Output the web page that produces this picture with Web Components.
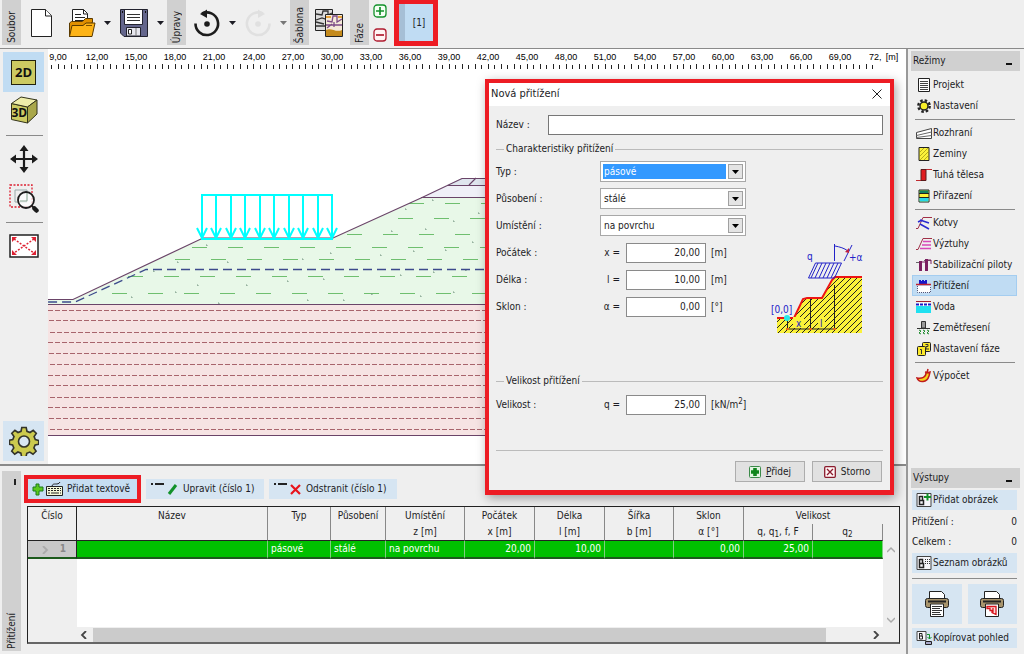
<!DOCTYPE html>
<html lang="cs">
<head>
<meta charset="utf-8">
<title>Stabilita svahu – Přitížení</title>
<style>
  html, body { margin: 0; height: 100%; }
  body {
    font: 10px/14px "DejaVu Sans Condensed", "DejaVu Sans", "Noto Sans", sans-serif;
    color: #1c1c24;
    background: #efefef;
  }
</style>
</head>
<body>
<app-shell></app-shell>

<script>
const ICONS = {
  file: [24, 30, `<path d="M1.5 1.5h14l6 6v21h-20z" fill="#fff" stroke="#222"/><path d="M15.500 1.500v6.500h6" fill="#fff" stroke="#222"/>`],
  open: [28, 30, `<path d="M4.500 20V1.500h11l4 4V16h-15" fill="#fff" stroke="#222"/><path d="M15.500 1.500v4.500h4" fill="none" stroke="#222"/><path d="M7 6.500h6M7 9.500h10M7 12.500h10" stroke="#222"/><path d="M1.500 28.500V15l2-1.500h11l3-3h7v4z" fill="#e08f00" stroke="#5a3a00"/><path d="M1.500 28.500L4 17.500h11l3-2.500h9l-3 13.500z" fill="#fdb316" stroke="#5a3a00"/><path d="M18 17.500h6" stroke="#7a5000"/>`],
  save: [30, 30, `<path d="M1.500 1.500h27v27H5l-3.500-3.500z" fill="#64668c" stroke="#22222e"/><path d="M5.500 2v14.500h18V2" fill="#fff" stroke="#22222e"/><path d="M8 6.500h13M8 9.500h13M8 12.500h13" stroke="#333"/><path d="M7.500 28v-8.500h14V28z" fill="#e6e6ee" stroke="#22222e"/><path d="M9.500 21.500h3v4.500h-3z" fill="#fff" stroke="#222"/><path d="M17 20v8" stroke="#777"/><path d="M3 4h1M26 4h1" stroke="#111" stroke-width="2"/>`],
  undo: [28, 28, `<path d="M2.500 14.500A11.300 11.300 0 1 0 9 4.500" fill="none" stroke="#1c1c1c" stroke-width="2.600"/><path d="M7 5l7-4.500v8.500z" fill="#1c1c1c"/><circle cx="14" cy="15" r="2.800" fill="#1c1c1c"/>`],
  redo: [28, 28, `<path d="M25.500 14.500A11.300 11.300 0 1 1 19 4.500" fill="none" stroke="#e0e0e0" stroke-width="2.600"/><path d="M21 5l-7-4.500v8.500z" fill="#e0e0e0"/><circle cx="14" cy="15" r="2.800" fill="#e0e0e0"/>`],
  template: [30, 30, `<path d="M1.500 1.500h17v21h-17z" fill="#ddd" stroke="#222"/><path d="M2 6l6 1 1-4h5v4l4-2M2 12l6-2 6 2M2 18h9M2 14l8 2" fill="none" stroke="#333" stroke-width="1.300"/><path d="M11.500 6.500h17v22h-17z" fill="#f4ead8" stroke="#222"/><path d="M12 22c5-3 10 3 16 0v6H12z" fill="#c48a1c"/><path d="M13 13l5 1 1-6h4v6l5-3M12 17h16M13 20l5-4M20 14v5" fill="none" stroke="#7b4a86" stroke-width="1.300"/><path d="M12 9h5M24 9h4" stroke="#e8a23c" stroke-width="2"/>`],
  plusBox: [14, 14, `<rect x="1" y="1" width="12" height="12" rx="3" fill="#f4fff4" stroke="#12912a" stroke-width="1.300"/><path d="M7 3v8M3 7h8" stroke="#12912a" stroke-width="1.700"/>`],
  minusBox: [14, 14, `<rect x="1" y="1" width="12" height="12" rx="3" fill="#fff4f4" stroke="#b01c30" stroke-width="1.300"/><path d="M3 7h8" stroke="#b01c30" stroke-width="1.700"/>`],
  caret: [7, 4, `<path d="M0 0h7L3.500 4z" fill="currentColor"/>`],
  cube: [28, 28, `<path d="M1.500 7.500l16 3.500v16l-16-3.500z" fill="#ccca62" stroke="#33331a"/><path d="M1.500 7.500L11 1l16 3-9.500 7z" fill="#eeedaa" stroke="#33331a"/><path d="M17.500 11L27 4v14l-9.500 9z" fill="#a9a74a" stroke="#33331a"/>`],
  move: [28, 28, `<path d="M14 4v20M4 14h20" stroke="#1c1c1c" stroke-width="2.200"/><path d="M14 0l4.500 6h-9zM14 28l4.500-6h-9zM0 14l6-4.500v9zM28 14l-6-4.500v9z" fill="#1c1c1c"/>`],
  zoom: [30, 30, `<path d="M1 1h22v22H1z" fill="none" stroke="#d23" stroke-width="1.300" stroke-dasharray="2 1.500"/><path d="M6 6h12v12H6z" fill="none" stroke="#9aa"/><circle cx="17" cy="16" r="8" fill="#fff" fill-opacity=".75" stroke="#1c1c1c" stroke-width="1.800"/><path d="M18 9v8h-7" fill="none" stroke="#8aa894"/><path d="M23 22l2 2" stroke="#1c1c1c" stroke-width="2"/><path d="M25.500 24.500l2 2" stroke="#1c1c1c" stroke-width="4.500" stroke-linecap="round"/>`],
  extent: [30, 24, `<path d="M1 1h28v22H1z" fill="#fff" stroke="#222" stroke-width="1.500"/><path d="M5 5l20 14M25 5L5 19" stroke="#d23" stroke-width="1.500" stroke-dasharray="2 1.500"/><path d="M3 3h5L3 8zM27 3h-5l5 5zM3 21h5l-5-5zM27 21h-5l5-5z" fill="#d23"/>`],
  gear: [30, 30, `<path d="M12.800 1.500h4.400l.8 3.800 3 1.200 3.200-2.200 3.100 3.100-2.200 3.200 1.200 3 3.400.8v3.800l-3.600.8-1.200 3 2.200 3.200-3.100 3-3.200-2.100-3 1.200-.8 3.400h-4.400l-.7-3.500-3-1.200-3.200 2.200-3-3.100 2.100-3.200-1.200-3-3.200-.7v-4l3.400-.7 1.200-3-2.200-3.200L5.900 4.300 9 6.500l3-1.200z" fill="#ccca4e" stroke="#33332a" stroke-width="1.600"/><circle cx="15" cy="15.500" r="5.500" fill="#d9e6f3" stroke="#33332a" stroke-width="1.600"/>`],
  addKeys: [32, 16, `<path d="M4 3h3v3h4v4H7v4H4v-4H1V6h3z" fill="#5ac81e" stroke="#1c7a1c"/><path d="M14.500 5.500h16v9h-16z" fill="#f4f8d8" stroke="#222"/><path d="M16 7.500h13M16 9.500h13" stroke="#222" stroke-dasharray="2 1"/><path d="M16 12h2M19 12h8M28 12h1" stroke="#222"/><path d="M20 5c1-4 6 0 8-4" fill="none" stroke="#222"/>`],
  editRow: [30, 14, `<path d="M1 2h2M5 2h9" stroke="#222" stroke-width="2"/><path d="M19 12l7-9" stroke="#12912a" stroke-width="3"/>`],
  deleteRow: [30, 14, `<path d="M1 2h2M5 2h9" stroke="#222" stroke-width="2"/><path d="M18 3l9 9M27 3l-9 9" stroke="#e8141c" stroke-width="2.200"/>`],
  add: [12, 12, `<rect x=".5" y=".5" width="11" height="11" rx="1" fill="#e2f4e2" stroke="#3c8a4a"/><path d="M6 2v8M2 6h8" stroke="#10851c" stroke-width="3.600"/>`],
  cancel: [12, 12, `<rect x=".7" y=".7" width="10.600" height="10.600" rx="1" fill="#fff4f4" stroke="#8a1a2c" stroke-width="1.300"/><path d="M3 3l6 6M9 3L3 9" stroke="#8a1a2c" stroke-width="1.300"/>`],
  close: [12, 12, `<path d="M1.500 1.500l9 9M10.500 1.500l-9 9" stroke="#222"/>`],
  project: [16, 16, `<path d="M2.500 1.500h11v13h-11z" fill="#fff" stroke="#222"/><path d="M4 4.500h8M4 6.500h8M4 8.500h8M4 10.500h8M4 12.500h8" stroke="#444"/>`],
  settings: [16, 16, `<circle cx="8" cy="8" r="5.700" fill="none" stroke="#222" stroke-width="2.400" stroke-dasharray="2.500 1.970"/><circle cx="8" cy="8" r="4" fill="#f8ef2a" stroke="#222" stroke-width="1.500"/>`],
  surface: [16, 16, `<path d="M.5 7.500L15.500 3.500v10H.5z" fill="#fff" stroke="#444"/><path d="M.5 10.500l15-3.500M.5 12.500l15-2" stroke="#666" fill="none"/>`],
  soils: [16, 16, `<path d="M3 1.500h10v13H3z" fill="#fbf23a" stroke="#222"/><path d="M4 6l4-4M4 10l8-8M4 14l8-8M8 14l4-4" stroke="#b5ac1a"/>`],
  rigid: [16, 16, `<path d="M0 13.500h5M10 2.500h6" stroke="#c02a30"/><path d="M5 2.500h5v11H5z" fill="#e01c20" stroke="#5a1a1a"/>`],
  assign: [16, 16, `<path d="M3 2h10v12H3z" fill="#fbf23a" stroke="#222"/><path d="M3.500 2.500h9v3h-9z" fill="#128060"/><path d="M3.500 10h9v3.500h-9z" fill="#28d8e8"/><path d="M3 5.500h10M3 9.500h10" stroke="#222"/>`],
  anchors: [16, 16, `<path d="M0 13.500h2L7 2.500h9" fill="none" stroke="#a03048"/><path d="M4 5l9 3M4 9l9 5M2 7l4-2" stroke="#2a2ad0" stroke-width="1.500"/>`],
  reinforcement: [16, 16, `<path d="M0 13.500h2L7 2.500h9" fill="none" stroke="#a03048"/><path d="M7 5.500h8M6 9h9M4 12.500h11" stroke="#d848b8" stroke-width="1.500"/>`],
  piles: [16, 16, `<path d="M0 5.500h3M8 3.500h7" stroke="#666"/><path d="M3 4h3v10H3zM9 2h3v12H9z" fill="#7a2060"/><path d="M6 5h3M12 3h3v4" stroke="#7a2060" fill="none"/>`],
  surcharge: [16, 16, `<path d="M3 6V2h2v1h1V2h2v1h1V2h2v4z" fill="#1818c8"/><path d="M0 6.500h15" stroke="#c02030" stroke-width="1.500"/><path d="M1.500 8v6.500h13V8" fill="#fff" stroke="#557" stroke-dasharray="1 1"/>`],
  water: [16, 16, `<path d="M0 2.500h15" stroke="#a02030"/><path d="M0 4h15v3H0z" fill="#fff"/><path d="M0 7h15v7H0z" fill="#20e0f0"/><path d="M0 5.500h15" stroke="#1818c8" stroke-width="2" stroke-dasharray="3 1"/>`],
  quake: [16, 16, `<path d="M5.500 1.500h4V8h-4z" fill="#999" stroke="#333"/><path d="M1 8.500h13" stroke="#333"/><path d="M3 10l2 1-2 2 2 1M7 10l2 1-2 2 2 1M11 10l2 1-2 2 2 1" fill="none" stroke="#1c8a2c"/>`],
  stage: [16, 16, `<rect x="6.500" y="1.500" width="8" height="9" rx="1" fill="#fbe82a" stroke="#222"/><rect x="1.500" y="5.500" width="8" height="9" rx="1" fill="#fbe82a" stroke="#222"/><path d="M4 8.500h1.500V13M9.500 3.500h2.500v2h-2v2.500h3" fill="none" stroke="#333"/>`],
  analysis: [16, 16, `<path d="M1 10c2 5 10 5 12-2l1-4-4 1c0 4-4 6-9 5z" fill="#f6d21a" stroke="#c01c1c" stroke-width="1.500"/><path d="M11 5l1-4M9 4l5 1" stroke="#c01c1c" stroke-width="1.500"/>`],
  picAdd: [16, 16, `<path d="M1 1.500h14v13H1z" fill="#f6f6fa" stroke="#444"/><path d="M3.500 4v8.500h4v-4h-4M3.500 4.500h3v4" fill="none" stroke="#222" stroke-width="1.500"/><path d="M11.500 1.500v7M8 5h7" stroke="#12912a" stroke-width="2"/>`],
  picList: [16, 16, `<path d="M1 1.500h14v13H1z" fill="#f6f6fa" stroke="#444"/><path d="M3.500 4v8.500h4v-4h-4M3.500 4.500h3v4" fill="none" stroke="#222" stroke-width="1.500"/><path d="M9 4.500h5M9 6.500h5M9 8.500h5" stroke="#333" stroke-dasharray="1 1"/>`],
  picCopy: [16, 16, `<path d="M1 1.500h9v9H1z" fill="#f6f6fa" stroke="#444"/><path d="M3.500 3v6h3V6h-3M3.500 3.500h2.500v3" fill="none" stroke="#222"/><path d="M11 4.500h2.500V9M11.500 7l2 2 2-2" fill="none" stroke="#12912a"/><path d="M9.500 11.500h6v3h-6z" fill="#aac" stroke="#222"/>`],
  print: [26, 28, `<path d="M5.500 8V1.500h12l3 3V8" fill="#fff" stroke="#222"/><rect x="1.500" y="8.500" width="23" height="9" rx="2" fill="#a8946c" stroke="#222"/><path d="M4 11.500h18" stroke="#222" stroke-width="2"/><path d="M6.500 14v12.500h13V14z" fill="#fff" stroke="#222"/><path d="M8 16.500h10M8 18.500h8M8 20.500h10M8 22.500h8M8 24.500h9" stroke="#333"/>`],
  printPic: [26, 28, `<path d="M5.500 8V1.500h12l3 3V8" fill="#fff" stroke="#222"/><rect x="1.500" y="8.500" width="23" height="9" rx="2" fill="#a8946c" stroke="#222"/><path d="M4 11.500h18" stroke="#222" stroke-width="2"/><path d="M6.500 14v12.500h13V14z" fill="#fff" stroke="#222"/><path d="M8 16.500h9v8l-4-2v-2h-2v-2H8zM14 18v5" fill="#fbdcdc" stroke="#d8141c" stroke-width="1.300"/>`],
  left: [8, 8, `<path d="M6 0L2 4l4 4" fill="none" stroke="currentColor" stroke-width="1.800"/>`],
  right: [8, 8, `<path d="M2 0l4 4-4 4" fill="none" stroke="currentColor" stroke-width="1.800"/>`],
  up: [8, 8, `<path d="M0 6l4-4 4 4" fill="none" stroke="currentColor" stroke-width="1.500"/>`],
  down: [8, 8, `<path d="M0 2l4 4 4-4" fill="none" stroke="currentColor" stroke-width="1.500"/>`],
};

const RESET = `
  *, *::before, *::after { box-sizing: border-box; }
  button, input, select { font: inherit; color: inherit; margin: 0; border-radius: 0; }
  button { padding: 0; border: 0; background: none; }
  a { color: inherit; text-decoration: none; }
`;

// Registers an element whose shadow root is rendered once from its attributes.
function element(tag, css, html) {
  customElements.define(tag, class extends HTMLElement {
    connectedCallback() {
      if (this.shadowRoot) return;
      const t = document.createElement('template');
      t.innerHTML = `<style>${RESET}${css}</style>` +
        (typeof html === 'function' ? html(n => this.getAttribute(n) ?? '', this) : html);
      this.attachShadow({ mode: 'open' }).append(t.content.cloneNode(true));
    }
  });
}

element('ui-icon', `:host { display: inline-block; flex: none; } svg { display: block; }`, a => {
  const [w, h, body] = ICONS[a('name')];
  return `<svg width="${w}" height="${h}" viewBox="0 0 ${w} ${h}" aria-hidden="true">${body}</svg>`;
});

element('side-label', `
  :host { display: flex; flex-direction: column; justify-content: flex-end; align-items: center;
          width: 19px; background: #d0d0d0; padding: 2px 0; flex: none; }
  span { writing-mode: vertical-rl; transform: rotate(180deg); line-height: 18px; }
`, `<slot name="top"></slot><span><slot></slot></span>`);

element('tool-button', `
  :host { display: block; flex: none; }
  button { display: grid; place-items: center; width: 100%; height: 100%; }
`, a => `<button type="button" aria-label="${a('label')}"><ui-icon name="${a('icon')}"></ui-icon></button>`);

/* ---------- top toolbar ---------- */
element('top-bar', `
  :host { display: flex; align-items: flex-start; height: 48px; padding-left: 2px; background: #efefef; }
  side-label { height: 45px; }
  .group { display: flex; align-items: center; height: 45px; }
  .files { gap: 8px; padding: 0 3px 0 9px; }
  .files .first { margin-right: 6px; }
  .hist { gap: 8px; padding: 0 3px 0 7px; }
  .tpl { padding: 0 6px 0 5px; }
  .dim { color: #777; }
  .stack { display: flex; flex-direction: column; justify-content: space-between; height: 42px; padding: 4px 7px 0 4px; }
  .frame { border: 5px solid #ed1c24; border-top-width: 4px; height: 46px; width: 44px; }
  .phase { width: 100%; height: 100%; background: #c0dcf3; border-left: 6px solid #a6bfd6; }
`, `
  <side-label>Soubor</side-label>
  <div class="group files">
    <tool-button class="first" icon="file" label="Nový"></tool-button>
    <tool-button icon="open" label="Otevřít"></tool-button>
    <tool-button icon="caret" label="Poslední soubory"></tool-button>
    <tool-button icon="save" label="Uložit"></tool-button>
    <tool-button icon="caret" label="Uložit jako"></tool-button>
  </div>
  <side-label>Úpravy</side-label>
  <div class="group hist">
    <tool-button icon="undo" label="Zpět"></tool-button>
    <tool-button icon="caret" label="Historie zpět"></tool-button>
    <tool-button icon="redo" label="Znovu"></tool-button>
    <tool-button class="dim" icon="caret" label="Historie znovu"></tool-button>
  </div>
  <side-label>Šablona</side-label>
  <div class="group tpl"><tool-button icon="template" label="Šablona"></tool-button></div>
  <side-label>Fáze</side-label>
  <div class="stack">
    <tool-button icon="plusBox" label="Přidat fázi"></tool-button>
    <tool-button icon="minusBox" label="Odebrat fázi"></tool-button>
  </div>
  <div class="frame"><button class="phase" type="button">[1]</button></div>
`);

/* ---------- view tools ---------- */
element('view-tools', `
  :host { display: flex; flex-direction: column; align-items: center; width: 48px; padding: 3px 0;
          background: #efefef; flex: none; }
  .row { display: grid; place-items: center; width: 41px; height: 40px; margin-right: 1px; }
  .on { background: #c0dcf3; }
  .sq { display: grid; place-items: center; width: 25px; height: 25px; border: 1px solid #22220f;
        background: #ccca62; font: bold 13px/20px "Open Sans", sans-serif; color: #111; }
  .cube { position: relative; }
  .cube span { position: absolute; left: 2px; top: 7px; font: bold 12px/20px "Open Sans", sans-serif; color: #111; }
  hr { width: 37px; height: 1px; margin: 3px 0; border: 0; background: #8a8a8a; flex: none; }
  .end { margin-top: auto; background: #d6e5f2; }
`, `
  <button class="row on" type="button"><span class="sq">2D</span></button>
  <button class="row" type="button"><span class="cube"><ui-icon name="cube"></ui-icon><span>3D</span></span></button>
  <hr>
  <button class="row" type="button" aria-label="Posun"><ui-icon name="move"></ui-icon></button>
  <button class="row" type="button" aria-label="Lupa"><ui-icon name="zoom"></ui-icon></button>
  <hr>
  <button class="row" type="button" aria-label="Celý model"><ui-icon name="extent"></ui-icon></button>
  <button class="row end" type="button" aria-label="Nastavení vizualizace"><ui-icon name="gear"></ui-icon></button>
`);

/* ---------- ruler and slope drawing ---------- */
element('slope-view', `
  :host { display: block; flex: 1; min-width: 0; background: #fff; overflow: hidden; }
  svg { display: block; width: 100%; height: 100%; }
  text { font: 9px "Liberation Sans", sans-serif; fill: #000; text-anchor: middle; }
  .start { text-anchor: start; }
`, () => {
  let ruler = '';
  for (let i = 0; i <= 20; i++)
    ruler += `<text x="${Math.round(10 + i * 39.1)}" y="11">${9 + i * 3},00</text>`;
  let ticks = '';
  for (let i = 0; i < 127; i++) {
    const x = Math.round(3 + i * 6.517);
    ticks += `<path d="M${x}.5 ${i % 2 ? 15 : 16}v${i % 2 ? 5 : 4}"/>`;
  }
  const greens = [[203, 409], [218, 398], [234, 347], [247, 192], [259, 175], [276, 128], [293, 112]]
    .map(([y, x]) => `<path d="M${x} ${y}.5H890"/>`).join('');
  const reds = [310, 320, 332, 342, 353, 364, 375, 385, 397, 407, 418, 429]
    .map((y, i) => `<path d="M${48 + i % 3} ${y}.5H890"/>`).join('');
  const specks = [[206, 245], [177, 262], [227, 262], [153, 271], [197, 285], [246, 285], [131, 297], [175, 292],
    [218, 303], [330, 253], [302, 259], [380, 255], [413, 251], [445, 250], [391, 231], [425, 229], [453, 221],
    [405, 209], [432, 200], [472, 242], [478, 213], [287, 281], [323, 279], [400, 275], [433, 272], [465, 270],
    [371, 294], [420, 296], [453, 292], [343, 300], [307, 300]]
    .map(([x, y]) => `<path d="M${x} ${y}h1v1"/>`).join('');
  let arrows = '';
  for (let i = 0; i < 10; i++) {
    const x = Math.round(202 + i * 14.45);
    arrows += `<path d="M${x} 195v43M${x - 5} 228l5 10 5-10"/>`;
  }
  return `<svg role="img" aria-label="Model svahu">
    ${ruler}
    <text class="start" x="821" y="11">72,</text>
    <text x="844" y="11">[m]</text>
    <g stroke="#222">${ticks}</g>
    <g transform="translate(-48 -49)" fill="none">
      <path d="M48 300H73L203 238H333L421 198H890V304H48z" fill="#e8f8e8"/>
      <path d="M421 198L447 185H890v13z" fill="#efeff7"/>
      <path d="M447 185L462 178H890v7z" fill="#dfe5ee"/>
      <path d="M48 304H890V435H48z" fill="#f6e3e3"/>
      <g stroke="#6fbf6f" stroke-dasharray="15 21">${greens}</g>
      <g stroke="#7a9a86">${specks}</g>
      <g stroke="#a8646c" stroke-dasharray="5 2">${reds}</g>
      <path d="M890 269.500H146L75 302H48" stroke="#3c4a8c" stroke-width="1.300" stroke-dasharray="9 5"/>
      <path d="M48 299.500H73L203 238H333L421 198L462 178.500H890M447 185.500H890M421 197.500H890M469 185l7-7M48 304.500H890M48 435.500H890" stroke="#6a4468" stroke-width="1.200"/>
      <g stroke="#0ff" stroke-width="2">${arrows}<path d="M201 195H333M201 239H333"/></g>
    </g>
  </svg>`;
});

/* ---------- bottom panel ---------- */
element('action-button', `
  :host { display: block; flex: none; }
  button { display: flex; align-items: center; gap: var(--icon-gap, 3px); width: 100%; height: 20px; padding: 0 4px;
           background: #d6e5f2; white-space: nowrap; }
  :host([active]) button { background: #c6ddf2; }
`, a => `<button type="button"><ui-icon name="${a('icon')}"></ui-icon><slot></slot></button>`);

element('load-table', `
  :host { display: grid; grid-template: 1fr 15px / 49px 1fr 16px; border: 1px solid #222; border-bottom: 2px solid #666;
          background: #efefef; min-height: 0; }
  .body { grid-area: 1 / 1 / 2 / 3; background: linear-gradient(90deg, #efefef 49px, #fff 49px); min-width: 0; }
  table { width: 100%; table-layout: fixed; border-collapse: separate; border-spacing: 0; }
  th { font-weight: normal; height: 17px; padding: 0; background: #efefef; border-right: 1px solid #888; white-space: nowrap; }
  thead tr:last-child th { border-bottom: 1px solid #222; }
  thead tr:first-child th:first-child, thead tr:last-child th:first-child { border-right: 1px solid #222; }
  thead tr:first-child th:last-child { border-right-color: #efefef; }
  td, tbody th { height: 18px; padding: 0 3px; background: #00c000; color: #fff; border-right: 1px solid #7fd07f;
       border-bottom: 2px solid #1c5a1c; white-space: nowrap; }
  tbody th { background: #c8c8c8; color: #888; border-right: 1px solid #222; padding: 0 10px; text-align: right; font-weight: bold; }
  tbody th ui-icon { float: left; margin: 4px 0 0 3px; color: #aaa; }
  .num { text-align: right; }
  sub { font-size: 8px; line-height: 0; vertical-align: -2px; }
  .v { grid-area: 1 / 3; display: flex; flex-direction: column; justify-content: space-between; align-items: center;
       padding: 39px 0 3px; color: #aaa; }
  .h { grid-area: 2 / 2; display: flex; align-items: center; gap: 5px; padding: 0 3px; color: #444; }
  .h i { flex: 1; height: 14px; background: #cbcbcb; margin-right: 41px; }
`, `
  <div class="body"><table>
    <colgroup><col style="width:49px"><col><col style="width:63px"><col style="width:55px"><col style="width:79px">
      <col style="width:70px"><col style="width:70px"><col style="width:69px"><col style="width:70px"><col style="width:69px"><col style="width:70px"></colgroup>
    <thead>
      <tr><th>Číslo</th><th>Název</th><th>Typ</th><th>Působení</th><th>Umístění</th><th>Počátek</th><th>Délka</th><th>Šířka</th><th>Sklon</th><th colspan="2">Velikost</th></tr>
      <tr><th></th><th></th><th></th><th></th><th>z [m]</th><th>x [m]</th><th>l [m]</th><th>b [m]</th><th>α [°]</th><th>q, q<sub>1</sub>, f, F</th><th>q<sub>2</sub></th></tr>
    </thead>
    <tbody>
      <tr><th><ui-icon name="right"></ui-icon>1</th><td></td><td>pásové</td><td>stálé</td><td>na povrchu</td><td class="num">20,00</td><td class="num">10,00</td><td></td><td class="num">0,00</td><td class="num">25,00</td><td></td></tr>
    </tbody>
  </table></div>
  <div class="v"><ui-icon name="up"></ui-icon><ui-icon name="down"></ui-icon></div>
  <div class="h"><ui-icon name="left"></ui-icon><i></i><ui-icon name="right"></ui-icon></div>
`);

element('load-panel', `
  :host { display: flex; gap: 3px; height: 190px; padding: 5px 6px 3px 2px; border-top: 2px solid #8a8a8a; background: #efefef; flex: none; }
  .dash { width: 2px; height: 6px; background: #222; margin: 6px 0 auto 6px; }
  .main { display: flex; flex-direction: column; flex: 1; min-width: 0; gap: 3px; padding: 4px 0 7px; }
  .bar { display: flex; align-items: center; gap: 5px; }
  .frame { border: 4px solid #ed1c24; width: 117px; }
  .edit { width: 118px; }
  .del { width: 128px; }
  load-table { flex: 1; margin-left: 3px; }
`, `
  <side-label><i class="dash" slot="top"></i>Přitížení</side-label>
  <div class="main">
    <div class="bar">
      <div class="frame"><action-button active icon="addKeys">Přidat textově</action-button></div>
      <action-button class="edit" icon="editRow">Upravit (číslo 1)</action-button>
      <action-button class="del" icon="deleteRow">Odstranit (číslo 1)</action-button>
    </div>
    <load-table></load-table>
  </div>
`);

/* ---------- right panel ---------- */
element('panel-title', `
  :host { display: flex; align-items: center; height: 20px; padding: 0 8px 0 2px; background: #d0d0d0; }
  i { width: 6px; height: 2px; margin: 5px 0 0 auto; background: #111; }
`, `<slot></slot><i></i>`);

element('mode-item', `
  :host { display: block; padding: 0 3px 0 1px; }
  a { display: flex; align-items: center; gap: 1px; height: 21px; padding-left: 3px; border: 1px solid transparent; white-space: nowrap; }
  :host([active]) a { background: #c0dcf3; border-color: #a4cdf0; }
`, (a, el) => `<a href="#${a('icon')}"${el.hasAttribute('active') ? ' aria-current="page"' : ''}><ui-icon name="${a('icon')}"></ui-icon><slot></slot></a>`);

element('output-box', `
  :host { display: block; --icon-gap: 1px; }
  .in { display: flex; flex-direction: column; padding: 2px 3px 0 1px; }
  p { display: flex; justify-content: space-between; margin: 0; height: 20px; line-height: 20px; }
  .sum { padding: 2px 0 1px; }
  hr { width: 100%; height: 1px; margin: 5px 0; border: 0; background: #8a8a8a; }
  .two { display: grid; grid-template-columns: 1fr 1fr; gap: 6px; margin-bottom: 4px; }
  .two tool-button { height: 40px; background: #d6e5f2; }
`, `
  <panel-title>Výstupy</panel-title>
  <div class="in">
    <action-button icon="picAdd">Přidat obrázek</action-button>
    <div class="sum"><p><span>Přitížení :</span><span>0</span></p><p><span>Celkem :</span><span>0</span></p></div>
    <action-button icon="picList">Seznam obrázků</action-button>
    <hr>
    <div class="two"><tool-button icon="print" label="Tisk"></tool-button><tool-button icon="printPic" label="Tisk obrázku"></tool-button></div>
    <action-button icon="picCopy">Kopírovat pohled</action-button>
  </div>
`);

element('mode-panel', `
  :host { display: flex; flex-direction: column; width: 118px; padding: 2px 4px 6px 3px; border-left: 2px solid #999;
          background: #efefef; flex: none; }
  nav { padding-top: 3px; }
  hr { height: 1px; margin: 3px 5px 2px 4px; border: 0; background: #8a8a8a; }
  output-box { margin-top: auto; }
`, `
  <panel-title>Režimy</panel-title>
  <nav>
    <mode-item icon="project">Projekt</mode-item>
    <mode-item icon="settings">Nastavení</mode-item>
    <hr>
    <mode-item icon="surface">Rozhraní</mode-item>
    <mode-item icon="soils">Zeminy</mode-item>
    <mode-item icon="rigid">Tuhá tělesa</mode-item>
    <mode-item icon="assign">Přiřazení</mode-item>
    <hr>
    <mode-item icon="anchors">Kotvy</mode-item>
    <mode-item icon="reinforcement">Výztuhy</mode-item>
    <mode-item icon="piles">Stabilizační piloty</mode-item>
    <mode-item icon="surcharge" active>Přitížení</mode-item>
    <mode-item icon="water">Voda</mode-item>
    <mode-item icon="quake">Zemětřesení</mode-item>
    <mode-item icon="stage">Nastavení fáze</mode-item>
    <hr>
    <mode-item icon="analysis">Výpočet</mode-item>
  </nav>
  <output-box></output-box>
`);

/* ---------- dialog ---------- */
element('choice-row', `
  :host { display: grid; grid-template-columns: 104px 146px; align-items: center; height: 21px; }
  .box { display: grid; grid-template-columns: 1fr 15px; height: 21px; padding: 2px; gap: 2px; border: 1px solid #a8a8a8; background: #fff; }
  select { grid-area: 1 / 1 / 2 / 3; appearance: none; border: 0; background: none; padding: 0 0 0 1px; outline: 0; z-index: 1; }
  .mark { grid-area: 1 / 1; }
  :host([active]) .mark { background: #3399ff; }
  :host([active]) select { color: #fff; }
  .arrow { grid-area: 1 / 2; display: grid; place-items: center; border: 1px solid #a0a0a0; background: #e4e4e4; color: #000; }
`, a => `<label for="s">${a('label')} :</label>
  <div class="box"><span class="mark"></span><span class="arrow"><ui-icon name="caret"></ui-icon></span>
  <select id="s"><option>${a('value')}</option></select></div>`);

element('value-row', `
  :host { display: grid; grid-template-columns: 104px 20px 80px auto; align-items: center; height: 21px; }
  .sym { text-align: right; }
  input { width: 80px; height: 20px; margin-left: 6px; padding: 0 5px; border: 1px solid #8a8a8a; background: #fff; text-align: right; }
  .unit { padding-left: 11px; }
`, a => `<label for="v">${a('label')} :</label><span class="sym">${a('symbol')} =</span>
  <input id="v" value="${a('value')}"><span class="unit"><slot></slot></span>`);

element('group-title', `
  :host { display: flex; align-items: center; gap: 2px; height: 14px; }
  :host::before { content: ""; width: 8px; height: 1px; background: #bbb; }
  :host::after { content: ""; flex: 1; height: 1px; background: #bbb; }
`, `<slot></slot>`);

element('push-button', `
  :host { display: block; }
  button { display: flex; align-items: center; justify-content: center; gap: 5px; width: 70px; height: 21px;
           border: 1px solid #adadad; background: #e1e1e1; }
`, a => `<button type="button"><ui-icon name="${a('icon')}"></ui-icon><span><slot></slot></span></button>`);

element('load-sketch', `
  :host { display: block; }
  svg { display: block; }
  text { font: 10px "DejaVu Sans Condensed", sans-serif; fill: #2222c8; }
`, `
  <svg width="96" height="96" viewBox="0 0 96 96" role="img" aria-label="Schéma přitížení">
    <defs><pattern id="h" width="6" height="6" patternUnits="userSpaceOnUse">
      <path d="M0 0h6v6H0z" fill="#fbf23a"/><path d="M-1 7L7-1M-1 1l2-2M5 7l2-2" stroke="#222"/></pattern></defs>
    <path d="M8 78h17l10-20h18l12-21h28v56H8z" fill="url(#h)"/>
    <path d="M8 78h17l9-19 4-1h15l10-18 3-3h27" fill="none" stroke="#ee1414" stroke-width="2"/>
    <path d="M18.500 78v11h47V45M41.500 59v30" fill="none" stroke="#222"/>
    <path d="M24 77h11v11H24zM49 77h7v11h-7z" fill="#fbf23a"/>
    <circle cx="18" cy="78" r="3" fill="#28e8e8"/>
    <path d="M17 89h3M40 89h3M64 89h3" stroke="#e66a14" stroke-width="2"/>
    <path d="M46.500 23h26l-7 15h-26zM49 23l-7 15M53 23l-7 15M57 23l-7 15M61 23l-7 15M65 23l-7 15M69 23l-7 15M65.500 4v17M83 5L75 21M66 6c5 1 9 2 13 5" fill="none" stroke="#2222c8"/>
    <path d="M76 12l4-4v5z" fill="#c02040"/>
    <text x="38" y="20">q</text><text x="80" y="21">+α</text><text x="2" y="73">[0,0]</text>
    <text x="27" y="87">x</text><text x="51" y="87">l</text>
  </svg>
`);

element('load-dialog', `
  :host { display: block; width: 409px; border: 4px solid #ed1c24; border-bottom-width: 5px; background: #efefef; box-shadow: 2px 3px 10px rgba(0,0,0,.35); }
  header { display: flex; align-items: center; justify-content: space-between; height: 23px; padding: 0 7px 2px 2px; background: #fff; }
  h2 { margin: 0; font: inherit; font-size: 11px; }
  form { display: flex; flex-direction: column; padding: 9px 7px 8px; }
  .name { display: flex; align-items: center; }
  .name label { width: 52px; }
  .name input { flex: 1; min-width: 0; height: 20px; padding: 0 4px; border: 1px solid #777; background: #fff; }
  .part { display: flex; justify-content: space-between; align-items: flex-end; margin: 5px 0 0; height: 175px; }
  .rows { display: flex; flex-direction: column; gap: 6px; align-self: flex-start; }
  load-sketch { margin: 0 18px 0 0; }
  .size { margin-top: 6px; }
  .g1 { margin-top: 7px; }
  .g2 { margin-top: 38px; }
  sup { font-size: 8px; line-height: 0; vertical-align: 4px; }
  footer { display: flex; justify-content: flex-end; gap: 7px; margin-top: 35px; padding: 10px 1px 0; border-top: 1px solid #bbb; }
  u { text-underline-offset: 1px; }
`, `
  <header><h2>Nová přitížení</h2><tool-button icon="close" label="Zavřít"></tool-button></header>
  <form>
    <div class="name"><label for="n">Název :</label><input id="n"></div>
    <group-title class="g1">Charakteristiky přitížení</group-title>
    <div class="part">
      <div class="rows">
        <choice-row active label="Typ" value="pásové"></choice-row>
        <choice-row label="Působení" value="stálé"></choice-row>
        <choice-row label="Umístění" value="na povrchu"></choice-row>
        <value-row label="Počátek" symbol="x" value="20,00">[m]</value-row>
        <value-row label="Délka" symbol="l" value="10,00">[m]</value-row>
        <value-row label="Sklon" symbol="α" value="0,00">[°]</value-row>
      </div>
      <load-sketch></load-sketch>
    </div>
    <group-title class="g2">Velikost přitížení</group-title>
    <value-row class="size" label="Velikost" symbol="q" value="25,00">[kN/m<sup>2</sup>]</value-row>
    <footer>
      <push-button icon="add"><u>P</u>řidej</push-button>
      <push-button icon="cancel">Storno</push-button>
    </footer>
  </form>
`);

/* ---------- shell ---------- */
element('app-shell', `
  :host { display: flex; flex-direction: column; min-height: 100vh; position: relative; }
  top-bar { border-bottom: 1px solid #8a8a8a; height: 49px; flex: none; }
  .work { display: flex; flex: 1; }
  .left { display: flex; flex-direction: column; flex: 1; min-width: 0; }
  .view { display: flex; flex: 1; min-height: 0; }
  load-dialog { position: absolute; left: 485px; top: 79px; z-index: 2; }
`, `
  <top-bar></top-bar>
  <div class="work">
    <div class="left">
      <div class="view"><view-tools></view-tools><slope-view></slope-view></div>
      <load-panel></load-panel>
    </div>
    <mode-panel></mode-panel>
  </div>
  <load-dialog></load-dialog>
`);
</script>
</body>
</html>
